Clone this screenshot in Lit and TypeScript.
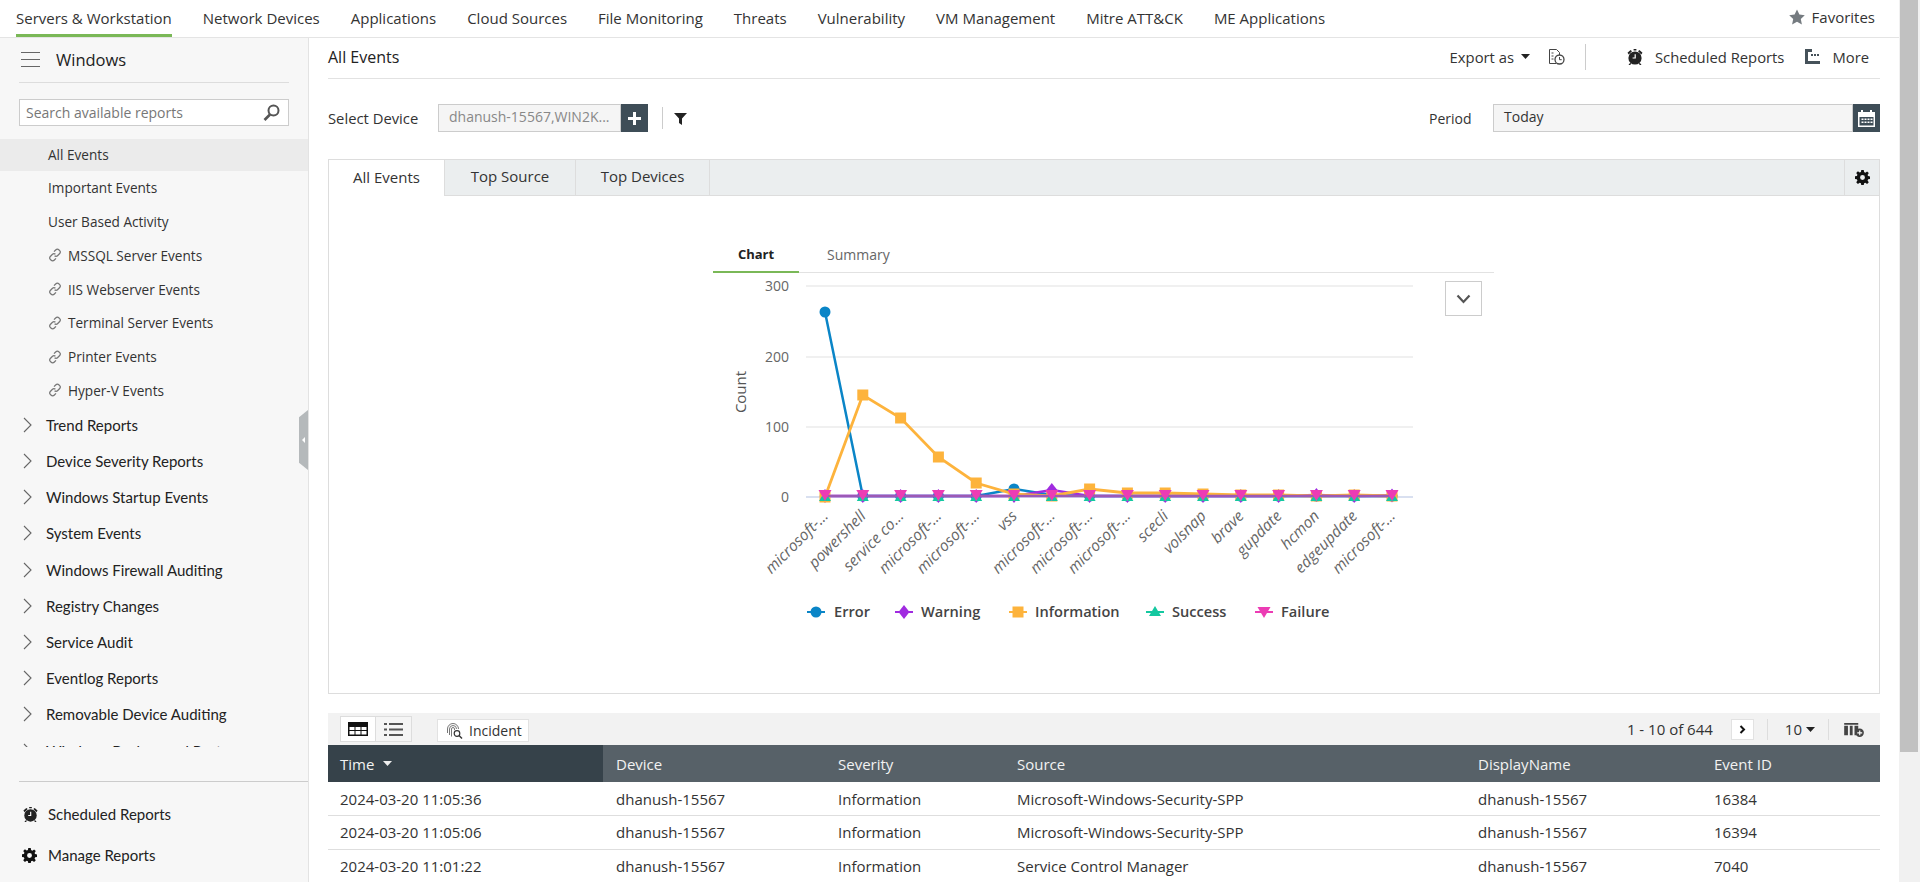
import { LitElement, html, css, svg } from "lit";
import { customElement } from "lit/decorators.js";

const alarm = (s = 18) => html`<svg width=${s} height=${s} viewBox="0 0 18 18" fill="#222"><circle cx="9" cy="10" r="6.6"/><path d="M1.5 4.8 4.6 2 6 3.3 2.7 6.6zM16.5 4.8 13.4 2 12 3.3l3.3 3.3zM7.6 1h2.8v1.4H7.6zM4 15l-1.5 2h1.6l1.4-1.5zM14 15l1.5 2h-1.6l-1.4-1.5z"/><path d="M8.6 6.2h1.2v4.4H6.6V9.5h2z" fill="#fff"/></svg>`;
const gear = (s = 16) => html`<svg width=${s} height=${s} viewBox="0 0 16 16" fill="#111"><path fill-rule="evenodd" d="M6.7 0h2.6l.4 2.2 1.3.6 1.9-1.3 1.8 1.8-1.3 1.9.6 1.3 2 .4v2.6l-2 .4-.6 1.3 1.3 1.9-1.8 1.8-1.9-1.3-1.3.6-.4 2H6.7l-.4-2-1.3-.6-1.9 1.3-1.8-1.8 1.3-1.9-.6-1.3-2-.4V6.7l2-.4.6-1.3-1.3-1.9L3.1 1.3 5 2.6l1.3-.6zM8 5.4a2.6 2.6 0 1 0 0 5.2 2.6 2.6 0 0 0 0-5.2z"/></svg>`;
const link = html`<svg class="link" width="14" height="14" viewBox="0 0 14 14" fill="none" stroke="#777" stroke-width="1.3"><path d="M6 3.6 7.9 1.7a2 2 0 0 1 2.9 0l.9.9a2 2 0 0 1 0 2.9L9.5 7.7a2 2 0 0 1-2.9 0"/><path d="M8 10.4 6.1 12.3a2 2 0 0 1-2.9 0l-.9-.9a2 2 0 0 1 0-2.9l2.2-2.2a2 2 0 0 1 2.9 0"/></svg>`;
const chev = html`<svg width="9" height="16" viewBox="0 0 9 16" fill="none" stroke="#666" stroke-width="1.1"><path d="M1 1l7 7-7 7"/></svg>`;
const caret = html`<svg class="caret" width="9" height="5" viewBox="0 0 9 5" fill="#222"><path d="M0 0h9L4.5 5z"/></svg>`;

const top = ["Servers & Workstation", "Network Devices", "Applications", "Cloud Sources", "File Monitoring", "Threats", "Vulnerability", "VM Management", "Mitre ATT&CK", "ME Applications"];
const plain = ["All Events", "Important Events", "User Based Activity"];
const linked = ["MSSQL Server Events", "IIS Webserver Events", "Terminal Server Events", "Printer Events", "Hyper-V Events"];
const groups = ["Trend Reports", "Device Severity Reports", "Windows Startup Events", "System Events", "Windows Firewall Auditing", "Registry Changes", "Service Audit", "Eventlog Reports", "Removable Device Auditing", "Windows Backup and Restore"];
const rows = [
  ["2024-03-20 11:05:36", "dhanush-15567", "Information", "Microsoft-Windows-Security-SPP", "dhanush-15567", "16384"],
  ["2024-03-20 11:05:06", "dhanush-15567", "Information", "Microsoft-Windows-Security-SPP", "dhanush-15567", "16394"],
  ["2024-03-20 11:01:22", "dhanush-15567", "Information", "Service Control Manager", "dhanush-15567", "7040"],
];
const cats = ["microsoft-…", "powershell", "service co…", "microsoft-…", "microsoft-…", "vss", "microsoft-…", "microsoft-…", "microsoft-…", "scecli", "volsnap", "brave", "gupdate", "hcmon", "edgeupdate", "microsoft-…"];

// Chart coordinates are relative to the svg, whose origin is page (713, 275).
const OX = 713, OY = 275;
const px = (i: number) => 825 + i * 37.8 - OX;
const py = (y: number) => y - OY;
const flat = Array.from({ length: 16 }, () => 496);
const err = [312, 496, 496, 496, 496, 489, 495, 496, 496, 496, 496, 496, 496, 496, 496, 496];
const warn = [496, 496, 496, 496, 496, 496, 490, 496, 496, 496, 496, 496, 496, 495, 496, 495.5];
const info = [497, 395, 418, 457, 483, 494, 496, 489, 493, 493, 494, 495, 495, 496, 495, 496];
const line = (v: number[], c: string, w = 2.5) => svg`<polyline points=${v.map((y, i) => `${px(i)},${py(y)}`).join(" ")} fill="none" stroke=${c} stroke-width=${w}/>`;
const tri = (x: number, y: number, c: string) => svg`<path d="M${x} ${y - 6}l6 10h-12z" fill=${c}/>`;
const down = (x: number, y: number, c: string) => svg`<path d="M${x} ${y + 6}l-6.500 -11h13z" fill=${c}/>`;
const dia = (x: number, y: number, c: string) => svg`<path d="M${x} ${y - 7}l5.500 7-5.500 7-5.500-7z" fill=${c}/>`;
const sq = (x: number, y: number, c: string, s = 5.500) => svg`<rect x=${x - s} y=${y - s} width=${s * 2} height=${s * 2} fill=${c}/>`;
const legend = [
  { n: "Error", x: 807, tx: 834, c: "#0a85c7", m: (x: number, y: number) => svg`<circle cx=${x} cy=${y} r="5.500" fill="#0a85c7"/>` },
  { n: "Warning", x: 895, tx: 921, c: "#a02be0", m: (x: number, y: number) => dia(x, y, "#a02be0") },
  { n: "Information", x: 1009, tx: 1035, c: "#fdb33c", m: (x: number, y: number) => sq(x, y, "#fdb33c") },
  { n: "Success", x: 1146, tx: 1172, c: "#14c8a0", m: (x: number, y: number) => tri(x, y, "#14c8a0") },
  { n: "Failure", x: 1255, tx: 1281, c: "#ec3cb4", m: (x: number, y: number) => down(x, y, "#ec3cb4") },
];

@customElement("event-chart")
class EventChart extends LitElement {
  static styles = css`
    :host { display: block; }
    svg { display: block; }
    text { font-family: "Open Sans", sans-serif; }
    .ax { font-size: 14px; fill: #666; }
    .cat { font-size: 15.5px; fill: #666; font-style: italic; }
    .ttl { font-size: 15px; fill: #555; }
    .lg { font-size: 14.6px; font-weight: 600; fill: #444; }
  `;
  render() {
    return html`<svg width="700" height="360" viewBox="0 0 700 360">
      ${[[286, "300"], [357, "200"], [427, "100"], [497, "0"]].map(([y, t]) => svg`
        <line x1=${806 - OX} x2=${1413 - OX} y1=${py(y as number)} y2=${py(y as number)} stroke=${t === "0" ? "#ccd6eb" : "#ebebeb"} stroke-width="1.5"/>
        <text class="ax" x=${789 - OX} y=${py(y as number) + 5} text-anchor="end">${t}</text>`)}
      <text class="ttl" text-anchor="middle" transform="translate(${746 - OX} ${py(392)}) rotate(-90)">Count</text>
      ${cats.map((c, i) => svg`<text class="cat" text-anchor="end" transform="translate(${px(i) + 4} ${py(517)}) rotate(-45)">${c}</text>`)}
      ${line(err, "#0a85c7")}
      ${err.map((y, i) => svg`<circle cx=${px(i)} cy=${py(y)} r="5.500" fill="#0a85c7"/>`)}
      ${line(warn, "#a02be0")}
      ${warn.map((y, i) => dia(px(i), py(y), "#a02be0"))}
      ${line(info, "#fdb33c", 2.8)}
      ${info.map((y, i) => sq(px(i), py(y), "#fdb33c"))}
      ${flat.map((y, i) => tri(px(i), py(y + 1), "#14c8a0"))}
      ${line(flat, "#9c59b6")}
      ${flat.map((y, i) => down(px(i), py(y - 1), "#ec3cb4"))}
      ${legend.map((l) => svg`
        <line x1=${l.x - OX} x2=${l.x + 18 - OX} y1=${py(612)} y2=${py(612)} stroke=${l.c} stroke-width="2"/>
        ${l.m(l.x + 9 - OX, py(612))}
        <text class="lg" x=${l.tx - OX} y=${py(617)}>${l.n}</text>`)}
    </svg>`;
  }
}

@customElement("app-root")
export class AppRoot extends LitElement {
  static styles = css`
    :host { display: block; width: 1920px; height: 882px; overflow: hidden; background: #fff; font-family: "Open Sans", sans-serif; font-size: 15px; color: #333; }
    * { box-sizing: border-box; }
    svg { display: block; flex: none; }
    .page { display: flex; height: 882px; }
    .content { width: 1899px; display: flex; flex-direction: column; }
    .scroll { width: 21px; background: #f1f1f1; padding-right: 2px; padding-left: 1px; }
    .thumb { height: 752px; background: #c1c1c1; }

    .nav { height: 38px; display: flex; align-items: stretch; padding: 0 0 0 16px; border-bottom: 1px solid #e4e4e4; gap: 31px; }
    .nav a { display: flex; align-items: center; white-space: nowrap; color: #333; border-bottom: 3px solid transparent; height: 37px; padding-top: 1px; }
    .nav a.on { border-bottom-color: #7ab857; }
    .fav { margin-left: auto; margin-right: 24px; display: flex; align-items: center; gap: 7px; padding-bottom: 4px; }

    .body { flex: 1; display: flex; min-height: 0; }
    .side { width: 309px; background: #f7f7f7; border-right: 1px solid #e3e3e3; display: flex; flex-direction: column; position: relative; }
    .head { margin: 0 19px; height: 45px; border-bottom: 1px solid #ddd; display: flex; align-items: center; gap: 16px; padding: 0 0 1px 2px; font-size: 16.5px; color: #222; }
    .search { margin: 16px 19px 13px; height: 27px; border: 1px solid #ccc; background: #fff; display: flex; align-items: center; justify-content: space-between; padding: 0 8px 0 6px; color: #777; font-size: 14px; }
    .list { height: 608px; overflow: hidden; }
    .it { height: 33.75px; display: flex; align-items: center; padding-left: 48px; gap: 6px; font-size: 13.6px; }
    .it.on { background: #ebebeb; height: 32px; padding-bottom: 1px; }
    .grs { margin-top: -.5px; }
    .gr { height: 36.2px; display: flex; align-items: center; padding-left: 23px; gap: 14px; font-family: Lato, sans-serif; font-size: 15px; color: #222; }
    .foot { margin-left: 19px; border-top: 1px solid #ccc; margin-top: 34px; padding-top: 15px; font-family: Lato, sans-serif; font-size: 15px; color: #222; }
    .foot div { height: 41px; display: flex; align-items: center; gap: 9px; margin-left: 3px; padding-bottom: 7px; }
    .handle { position: absolute; left: 299px; top: 372px; width: 9px; height: 60px; background: #b5b9bb; clip-path: polygon(100% 0, 100% 100%, 0 88%, 0 12%); }
    .handle::after { content: ""; position: absolute; left: 3px; top: 27px; border: 3px solid transparent; border-right-color: #fff; border-left: 0; }

    .main { flex: 1; padding: 0 19px; min-width: 0; }
    .title { height: 41px; border-bottom: 1px solid #e2e2e2; display: flex; align-items: center; font-size: 16px; font-weight: 500; color: #222; padding-bottom: 2px; }
    .acts { margin-left: auto; margin-bottom: 1px; display: flex; align-items: center; font-size: 14.8px; font-weight: 400; color: #333; }
    .caret { margin-left: 7px; }
    .vr { width: 1px; background: #ccc; height: 26px; }
    .filters { display: flex; align-items: center; height: 80px; padding-bottom: 2px; }
    .field { height: 28px; background: #f5f5f5; border: 1px solid #ccc; display: flex; align-items: center; padding: 0 0 3px 10px; font-size: 14px; }
    .fbtn { width: 27px; height: 28px; background: #3e4d57; display: flex; align-items: center; justify-content: center; }
    .lab { font-size: 14.8px; }
    .panel { height: 535px; border: 1px solid #ddd; }
    .tabs { height: 36px; background: #ebeeef; border-bottom: 1px solid #ddd; display: flex; }
    .tabs span { display: flex; align-items: center; justify-content: center; border-right: 1px solid #ddd; padding-bottom: 3px; }
    .tabs .t1 { width: 116px; background: #fff; height: 36px; }
    .tabs .t2 { width: 131px; }
    .tabs .t3 { width: 134px; }
    .tabs .gearb { margin-left: auto; width: 35px; border-left: 1px solid #ddd; border-right: 0; padding-bottom: 0; }
    .stage { position: relative; padding: 40px 0 0 384px; height: 498px; }
    .subt { display: flex; width: 781px; height: 37px; border-bottom: 1px solid #e2e2e2; font-size: 14px; margin-bottom: 2px; }
    .subt span { display: flex; align-items: center; justify-content: center; }
    .subt .a { width: 86px; font-weight: 700; font-size: 13px; color: #222; border-bottom: 2px solid #7ab857; height: 37px; }
    .subt .b { margin-left: 28px; color: #666; }
    .drop { position: absolute; left: 1116px; top: 85px; width: 37px; height: 35px; border: 1px solid #ccc; background: #fff; display: flex; align-items: center; justify-content: center; }

    .tools { margin-top: 19px; height: 32px; background: #f2f2f2; display: flex; align-items: center; padding: 0 15px 0 12px; }
    .view { display: flex; height: 26px; border: 1px solid #ddd; background: #f5f5f5; }
    .view span { width: 35px; display: flex; align-items: center; justify-content: center; }
    .view span:first-child { background: #fff; border-right: 1px solid #ddd; }
    .inc { margin-left: 25px; height: 23px; width: 92px; border: 1px solid #e2e2e2; background: #fff; display: flex; align-items: center; gap: 6px; padding-left: 8px; font-size: 14px; margin-top: 2px; }
    .pager { margin-left: auto; display: flex; align-items: center; font-size: 15px; }
    .pager .caret { margin-left: 4px; }
    .nx { width: 23px; height: 21px; margin-left: 18px; background: #fff; border: 1px solid #e2e2e2; display: flex; align-items: center; justify-content: center; }
    .tools .vr { height: 21px; background: #ddd; }
    table { width: 100%; border-collapse: collapse; table-layout: fixed; }
    th { height: 37px; background: #576168; color: #f2f2f2; font-weight: 400; text-align: left; padding: 0 0 0 13px; }
    th:first-child { background: #36424a; padding-left: 12px; }
    th .w { display: flex; align-items: center; gap: 9px; }
    td { height: 33.5px; padding: 0 0 0 13px; border-bottom: 1px solid #dedede; white-space: nowrap; }
    td:first-child { padding-left: 12px; }
  `;

  render() {
    return html`<div class="page">
      <div class="content">
        <nav class="nav">
          ${top.map((t, i) => html`<a class=${i === 0 ? "on" : ""}>${t}</a>`)}
          <div class="fav"><svg width="16" height="16" viewBox="0 0 16 16" fill="#757b80"><path d="M8 .5l2.4 5 5.4.7-4 3.8 1.1 5.5L8 12.8l-4.9 2.7L4.200 10l-4-3.800 5.400-.7z"/></svg>Favorites</div>
        </nav>
        <div class="body">
          <aside class="side">
            <div class="head">
              <svg width="19" height="15" viewBox="0 0 19 15" stroke="#666" stroke-width="1"><path d="M0 .5h19M0 7.500h19M0 14.500h19"/></svg>
              Windows
            </div>
            <div class="search">Search available reports
              <svg width="17" height="17" viewBox="0 0 17 17" fill="none" stroke="#555" stroke-width="2"><circle cx="10.500" cy="6.500" r="5"/><path d="M7 10.500 1.500 16" stroke-width="2.600"/></svg>
            </div>
            <div class="list">
              ${plain.map((t, i) => html`<div class="it ${i === 0 ? "on" : ""}">${t}</div>`)}
              ${linked.map((t) => html`<div class="it">${link}${t}</div>`)}
              <div class="grs">${groups.map((t) => html`<div class="gr">${chev}${t}</div>`)}</div>
            </div>
            <div class="foot">
              <div>${alarm(17)}Scheduled Reports</div>
              <div>${gear(15)}<span style="margin-left:2px">Manage Reports</span></div>
            </div>
            <div class="handle"></div>
          </aside>
          <main class="main">
            <div class="title">All Events
              <div class="acts">
                <span>Export as</span>${caret}
                <svg style="margin-left:18px" width="17" height="17" viewBox="0 0 17 17" fill="none" stroke="#444" stroke-width="1"><path d="M8 15.500H1.500V1.500h7l3 3V7"/><path d="M3.500 5h2M3.500 8h2M3.500 11h2"/><circle cx="11.500" cy="11.500" r="4.500" stroke-width="1.300"/><path d="M11.500 9v2.700h2.200"/></svg>
                <div class="vr" style="margin:0 40px 0 20px"></div>
                ${alarm(18)}
                <span style="margin-left:11px">Scheduled Reports</span>
                <svg style="margin-left:21px" width="15" height="15" viewBox="0 0 15 15" fill="#46525a"><path d="M0 0h7v3H3v9h12v3H0z"/><path d="M6 5h2v2H6zM9 5h2v2H9zM12 5h2v2h-2z"/></svg>
                <span style="margin:0 11px 0 12px">More</span>
              </div>
            </div>
            <div class="filters">
              <span class="lab" style="width:110px">Select Device</span>
              <div class="field" style="width:183px;color:#888">dhanush-15567,WIN2K...</div>
              <div class="fbtn"><svg width="13" height="13" viewBox="0 0 13 13" fill="#fff"><path d="M5 0h3v5h5v3H8v5H5V8H0V5h5z"/></svg></div>
              <div class="vr" style="height:22px;margin:0 11px 0 14px"></div>
              <svg width="13" height="13" viewBox="0 0 13 13" fill="#222"><path d="M0 1h13L8 6.500V13l-3-2V6.500z"/></svg>
              <span class="lab" style="margin-left:auto;width:64px;font-size:14px">Period</span>
              <div class="field" style="width:360px">Today</div>
              <div class="fbtn"><svg width="19" height="18" viewBox="0 0 19 18" fill="#fff"><path fill-rule="evenodd" d="M1 3h3V1h2v2h7V1h2v2h3v15H1zm1.500 5v8.500h14V8z"/><path d="M4.500 9.500h2v1.500h-2zM7.500 9.500h2v1.500h-2zM10.500 9.500h2v1.500h-2zM13.500 9.500h2v1.500h-2zM4.500 12.500h2v1.500h-2zM7.500 12.500h2v1.500h-2zM10.500 12.500h2v1.500h-2zM13.500 12.500h2v1.500h-2z"/></svg></div>
            </div>
            <section class="panel">
              <div class="tabs">
                <span class="t1">All Events</span><span class="t2">Top Source</span><span class="t3">Top Devices</span>
                <span class="gearb">${gear(15)}</span>
              </div>
              <div class="stage">
                <div class="subt"><span class="a">Chart</span><span class="b">Summary</span></div>
                <event-chart></event-chart>
                <div class="drop"><svg width="15" height="10" viewBox="0 0 15 10" fill="none" stroke="#555" stroke-width="2.200"><path d="M1.500 1.500 7.500 8l6-6.500"/></svg></div>
              </div>
            </section>
            <div class="tools">
              <div class="view">
                <span><svg width="20" height="14" viewBox="0 0 20 14" fill="#111"><path fill-rule="evenodd" d="M0 0h20v14H0zm1.500 5v3h5V5zm6 0v3h5V5zm6 0v3h5V5zm-12 4v3.500h5V9zm6 0v3.500h5V9zm6 0v3.500h5V9z"/></svg></span>
                <span><svg width="19" height="13" viewBox="0 0 19 13" fill="#555"><path d="M0 0h3v2H0zM5 0h14v2H5zM0 5.500h3v2H0zM5 5.500h14v2H5zM0 11h3v2H0zM5 11h14v2H5z"/></svg></span>
              </div>
              <div class="inc">
                <svg width="17" height="17" viewBox="0 0 17 17" fill="none" stroke="#777" stroke-width="1"><path d="M1.500 11V7a5.500 5.500 0 0 1 11 0M3.500 13V7a3.500 3.500 0 0 1 7 0M5.500 14.500V7a1.500 1.500 0 0 1 3 0v1"/><circle cx="11" cy="11.500" r="2.800" stroke="#333" stroke-width="1.200"/><path d="m13 13.500 3 3" stroke="#333" stroke-width="1.400"/></svg>
                Incident
              </div>
              <div class="pager">
                1 - 10 of 644
                <div class="nx"><svg width="7" height="9" viewBox="0 0 7 9" fill="none" stroke="#111" stroke-width="2"><path d="m1.500 1 3.500 3.500L1.500 8"/></svg></div>
                <div class="vr" style="margin:0 17px 0 13px"></div>
                10${caret}
                <div class="vr" style="margin:0 15px 0 13px"></div>
                <svg width="21" height="15" viewBox="0 0 22 16" fill="#444"><path d="M0 1h15v2H0zM0 4h4v10H0zM6 4h3v10H6zM11 4h4v6h-2v4h-2z"/><circle cx="16.500" cy="11.500" r="4.500"/><path d="M16 9h1.200v2h2v1.200h-2v2H16v-2h-2V11h2z" fill="#fff"/></svg>
              </div>
            </div>
            <table>
              <colgroup><col style="width:275px"><col style="width:222px"><col style="width:179px"><col style="width:461px"><col style="width:236px"><col></colgroup>
              <thead><tr>
                <th><div class="w">Time <svg width="9" height="5" viewBox="0 0 9 5" fill="#eee"><path d="M0 0h9L4.500 5z"/></svg></div></th>
                <th>Device</th><th>Severity</th><th>Source</th><th>DisplayName</th><th>Event ID</th>
              </tr></thead>
              <tbody>${rows.map((r) => html`<tr>${r.map((c) => html`<td>${c}</td>`)}</tr>`)}</tbody>
            </table>
          </main>
        </div>
      </div>
      <div class="scroll"><div class="thumb"></div></div>
    </div>`;
  }
}
void EventChart;
